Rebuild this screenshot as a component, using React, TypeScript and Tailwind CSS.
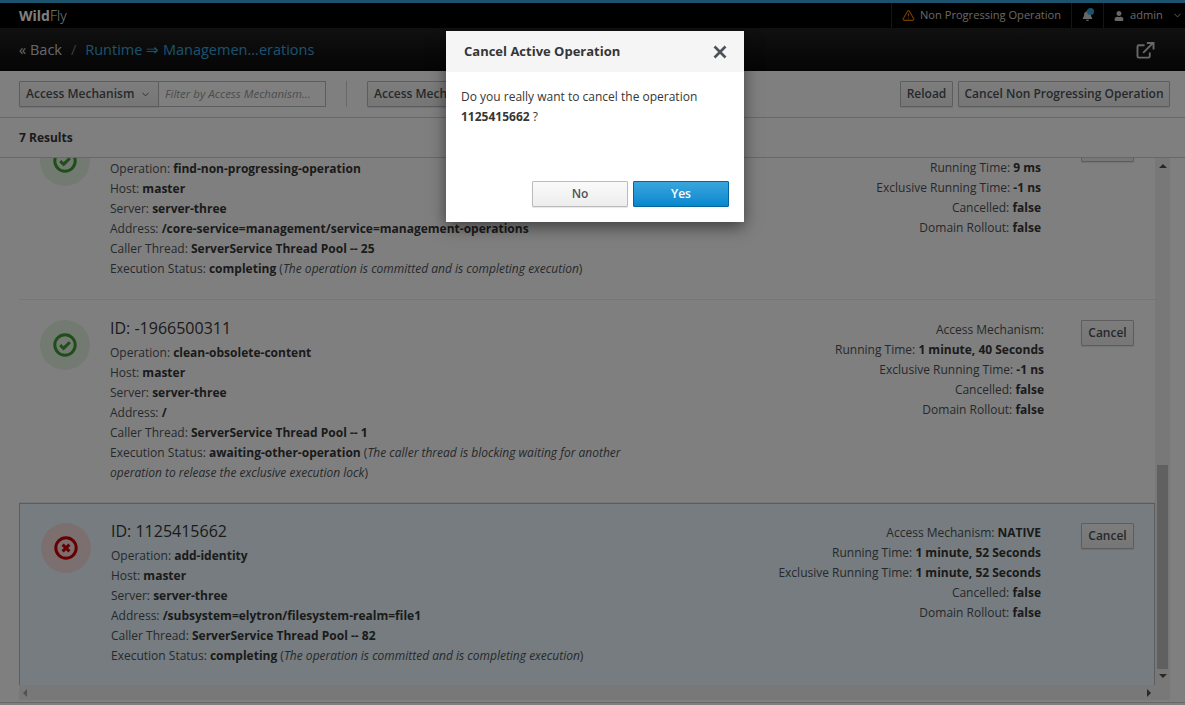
import React from 'react';
import { ChevronDown, TriangleAlert } from 'lucide-react';
import { FaBell, FaUser } from 'react-icons/fa';

interface OperationRow {
  id: string;
  operation: string;
  server: string;
  address: string;
  thread: string;
  status: string;
  statusNote: string;
  mechanism: string;
  running: string;
  exclusive: string;
  failed?: boolean;
  rightClass: string;
  minH: string;
}

const rows: OperationRow[] = [
  {
    id: '-1',
    operation: 'find-non-progressing-operation',
    server: 'server-three',
    address: '/core-service=management/service=management-operations',
    thread: 'ServerService Thread Pool -- 25',
    status: 'completing',
    statusNote: 'The operation is committed and is completing execution',
    mechanism: 'NATIVE',
    running: '9 ms',
    exclusive: '-1 ns',
    rightClass: 'pr-[3px] mt-[2px]',
    minH: 'h-[184px]',
  },
  {
    id: '-1966500311',
    operation: 'clean-obsolete-content',
    server: 'server-three',
    address: '/',
    thread: 'ServerService Thread Pool -- 1',
    status: 'awaiting-other-operation',
    statusNote: 'The caller thread is blocking waiting for another operation to release the exclusive execution lock',
    mechanism: '',
    running: '1 minute, 40 Seconds',
    exclusive: '-1 ns',
    rightClass: 'pr-0',
    minH: 'h-[203px]',
  },
  {
    id: '1125415662',
    operation: 'add-identity',
    server: 'server-three',
    address: '/subsystem=elytron/filesystem-realm=file1',
    thread: 'ServerService Thread Pool -- 82',
    status: 'completing',
    statusNote: 'The operation is committed and is completing execution',
    mechanism: 'NATIVE',
    running: '1 minute, 52 Seconds',
    exclusive: '1 minute, 52 Seconds',
    failed: true,
    rightClass: 'pr-[3px]',
    minH: 'h-[200px]',
  },
];

const Field = ({ label, value }: { label: string; value: string }) => (
  <div className="h-5 leading-5 whitespace-nowrap">
    {label}: <b className="font-bold text-[#363636]">{value}</b>
  </div>
);

const StatusIcon = ({ failed }: { failed?: boolean }) => (
  <div
    className={`w-[50px] h-[50px] rounded-full flex items-center justify-center shrink-0 ${
      failed ? 'bg-[#f9dede]' : 'bg-[#e4f5e2]'
    }`}
  >
    <svg width="26" height="26" viewBox="0 0 26 26" fill="none">
      <circle cx="13" cy="13" r="10.2" strokeWidth="3" stroke={failed ? '#cc0000' : '#3f9c35'} />
      {failed ? (
        <path d="M9.6 9.6l6.8 6.8M16.4 9.6l-6.8 6.8" stroke="#cc0000" strokeWidth="3" />
      ) : (
        <path d="M8.2 13.2l3.4 3.2 6.2-6.2" stroke="#3f9c35" strokeWidth="3" />
      )}
    </svg>
  </div>
);

const ToolButton = ({ children, className = '' }: { children: React.ReactNode; className?: string }) => (
  <button
    className={`h-[26px] border border-[#bbbbbb] rounded-[1px] bg-gradient-to-b from-[#fafafa] to-[#ededed] text-[#4d5258] font-semibold text-[12px] shadow-[0_1px_1px_rgba(3,3,3,0.1)] ${className}`}
  >
    {children}
  </button>
);

const Row = ({ row }: { row: OperationRow }) => (
  <div
    className={`flex pl-[21px] text-[12px] text-[#4d5258] ${row.minH} ${
      row.failed
        ? 'pt-[19px] pl-5 pr-5 bg-[#ecf9ff] border border-[#bbbbbb] border-b-0'
        : 'pt-5 pr-[21px] border-b border-[#ededed]'
    }`}
  >
    <StatusIcon failed={row.failed} />
    <div className="ml-5 w-[530px] shrink-0 -mt-px">
      <div className="text-[16px] leading-[18px] h-6 text-[#363636]">ID: {row.id}</div>
      <Field label="Operation" value={row.operation} />
      <Field label="Host" value="master" />
      <Field label="Server" value={row.server} />
      <Field label="Address" value={row.address} />
      <Field label="Caller Thread" value={row.thread} />
      <div className="leading-5">
        Execution Status: <b className="font-bold text-[#363636]">{row.status}</b> (
        <i>{row.statusNote}</i>)
      </div>
    </div>
    <div className={`flex-1 text-right ${row.rightClass}`}>
      <div className="h-5 leading-5 whitespace-nowrap">
        Access Mechanism: <b className="font-bold text-[#363636]">{row.mechanism}</b>
      </div>
      <Field label="Running Time" value={row.running} />
      <Field label="Exclusive Running Time" value={row.exclusive} />
      <Field label="Cancelled" value="false" />
      <Field label="Domain Rollout" value="false" />
    </div>
    <div className="w-[90px] flex justify-end shrink-0">
      <ToolButton className="w-[53px]">Cancel</ToolButton>
    </div>
  </div>
);

export default function App() {
  return (
    <div
      className="relative w-full h-screen overflow-hidden bg-white flex flex-col"
      style={{ fontFamily: '"Open Sans", "Noto Sans", sans-serif' }}
    >
      <div className="h-[3px] bg-[#39a5dc] shrink-0" />

      {/* masthead */}
      <div className="h-[25px] bg-black flex items-center shrink-0 text-[11.1px] text-[#d1d1d1]">
        <div className="ml-[19px] text-[14px] text-white">
          <b className="font-bold">Wild</b>
          <span className="font-light">Fly</span>
        </div>
        <div className="ml-auto flex h-full">
          <div className="flex items-center w-[180px] pl-[10px] border-l border-[#2b2b2b]">
            <TriangleAlert size={13} className="text-[#ec7a08]" />
            <span className="ml-[5px] whitespace-nowrap">Non Progressing Operation</span>
          </div>
          <div className="relative flex items-center justify-center w-8 border-l border-[#2b2b2b]">
            <FaBell size={11} />
            <span className="absolute top-[5px] right-[9px] w-[7px] h-[7px] rounded-full bg-[#39a5dc]" />
          </div>
          <div className="flex items-center w-[82px] pl-[10px] border-l border-[#2b2b2b]">
            <FaUser size={10} />
            <span className="ml-[6px]">admin</span>
            <ChevronDown size={11} className="ml-[9px]" />
          </div>
        </div>
      </div>

      {/* breadcrumb */}
      <div className="h-[43px] bg-gradient-to-b from-[#222222] to-[#0a0a0a] flex items-center shrink-0 pl-[19px] pr-[11px] pt-px text-[14.5px]">
        <span className="text-[#d1d1d1]">« Back</span>
        <span className="mx-[9px] text-[#72767b]">/</span>
        <span className="text-[#39a5dc]">Runtime ⇒ Managemen...erations</span>
        <svg className="ml-auto mr-[19px]" width="19" height="17" viewBox="0 0 20 18" fill="none" stroke="#d1d1d1" strokeWidth="2">
          <path d="M9 3.5H3a1.5 1.5 0 0 0-1.5 1.5v10A1.5 1.5 0 0 0 3 16.5h10a1.5 1.5 0 0 0 1.5-1.5v-4" />
          <path d="M7.5 11.5L17.5 1.5M11.5 1h7v7" />
        </svg>
      </div>

      {/* toolbar */}
      <div className="h-[47px] flex items-center shrink-0 pl-[19px] pr-[15px] border-b border-[#d1d1d1] text-[12px]">
        <div className="flex h-[26px]">
          <ToolButton className="w-[140px] flex items-center pl-[6px]">
            Access Mechanism
            <ChevronDown size={11} className="ml-[6px]" />
          </ToolButton>
          <div className="w-[168px] -ml-px border border-[#bbbbbb] flex items-center pl-[6px] italic text-[11.5px] text-[#999999] whitespace-nowrap">
            Filter by Access Mechanism...
          </div>
        </div>
        <div className="w-px h-[26px] bg-[#d1d1d1] ml-5 mr-5" />
        <ToolButton className="w-[120px] text-left pl-[6px] whitespace-nowrap overflow-hidden">Access Mechanism</ToolButton>
        <ToolButton className="w-[53px] ml-auto">Reload</ToolButton>
        <ToolButton className="w-[212px] ml-[5px]">Cancel Non Progressing Operation</ToolButton>
      </div>

      <div className="h-10 flex items-center shrink-0 pl-[19px] pt-px border-b border-[#d1d1d1] text-[12px] font-bold text-[#363636]">
        7 Results
      </div>

      {/* list with scrollbars */}
      <div className="flex h-[542px] shrink-0 pl-[19px] pr-[15px]">
        <div className="flex-1 flex flex-col min-w-0">
          <div className="flex-1 min-h-0 overflow-hidden">
            <div className="-mt-[42px]">
              {rows.map((row) => (
                <Row key={row.id} row={row} />
              ))}
            </div>
          </div>
          <div className="h-[15px] shrink-0 bg-[#f1f1f1] flex items-center justify-between px-1">
            <span className="w-0 h-0 border-y-4 border-y-transparent border-r-4 border-r-[#a3a3a3]" />
            <span className="w-0 h-0 border-y-4 border-y-transparent border-l-4 border-l-[#505050]" />
          </div>
        </div>
        <div className="w-[15px] shrink-0 bg-[#f1f1f1] flex flex-col items-center">
          <span className="mt-[6px] w-0 h-0 border-x-4 border-x-transparent border-b-4 border-b-[#505050]" />
          <div className="mt-[297px] w-[11px] h-[204px] bg-[#c1c1c1]" />
          <span className="mt-[5px] w-0 h-0 border-x-4 border-x-transparent border-t-4 border-t-[#505050]" />
        </div>
      </div>

      <div className="flex-1 border-t border-[#d1d1d1] mt-[2px]" />

      {/* backdrop */}
      <div className="absolute inset-0 bg-black/50" />

      {/* confirm dialog */}
      <div className="absolute left-[446px] top-[31px] w-[298px] h-[191px] bg-white shadow-[0_5px_15px_rgba(0,0,0,0.5)] text-[12px] text-[#363636]">
        <div className="h-[41px] bg-[#f5f5f5] flex items-center pl-[18px] pr-[17px]">
          <span className="text-[13px] font-bold whitespace-nowrap">Cancel Active Operation</span>
          <svg className="ml-auto" width="14" height="14" viewBox="0 0 14 14" stroke="#4d5258" strokeWidth="2.6">
            <path d="M1.5 1.5l11 11M12.5 1.5l-11 11" />
          </svg>
        </div>
        <div className="pt-[15px] px-[15px] leading-5 h-[109px]">
          Do you really want to cancel the operation
          <br />
          <b className="font-bold">1125415662</b> ?
        </div>
        <div className="flex justify-end gap-[5px] pr-[15px]">
          <ToolButton className="w-[96px]">No</ToolButton>
          <button className="w-[96px] h-[26px] border border-[#00659c] rounded-[1px] bg-gradient-to-b from-[#39a5dc] to-[#0088ce] text-white font-semibold text-[12px]">
            Yes
          </button>
        </div>
      </div>
    </div>
  );
}
